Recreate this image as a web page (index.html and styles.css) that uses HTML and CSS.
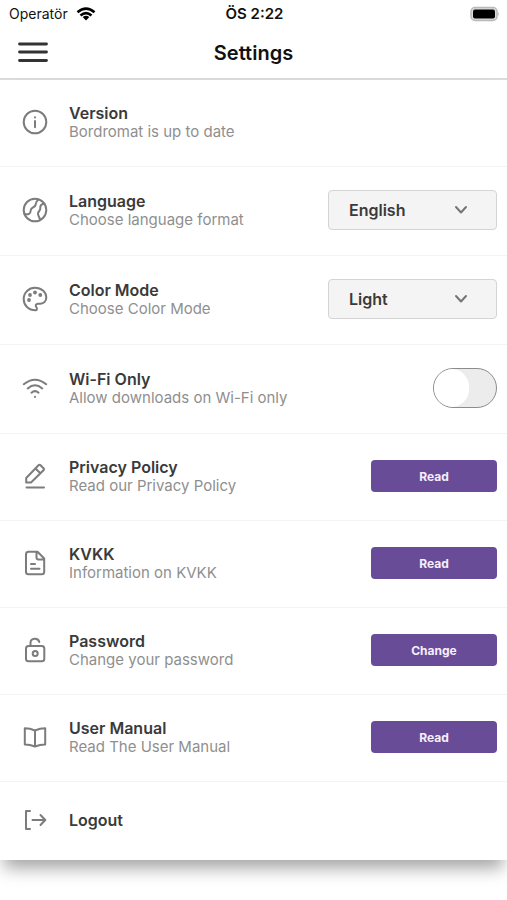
FILE: index.html
```html
<!DOCTYPE html>
<html lang="en">
<head>
<meta charset="utf-8">
<meta name="viewport" content="width=device-width, initial-scale=1">
<title>Settings</title>
<link rel="stylesheet" href="styles.css">
</head>
<body>
<header class="top">
  <div class="status">
    <div class="carrier">
      <span>Operatör</span>
      <svg width="20" height="14" viewBox="0 0 20 14" aria-hidden="true"><g fill="none" stroke="#000" stroke-width="2.6"><path d="M1.5 5.2Q10 -1.8 18.500 5.200"/><path d="M4.500 8.500Q10 3.800 15.500 8.500"/></g><path d="M6.700 10Q10 7.500 13.300 10L10 13.600z"/></svg>
    </div>
    <strong class="clock">ÖS 2:22</strong>
    <svg class="battery" width="30" height="16" viewBox="0 0 30 16" aria-hidden="true"><rect x="1" y="1.500" width="26" height="13" rx="4" fill="#ddd" stroke="#b9b9b9" stroke-width="1.500"/><rect x="3" y="3.500" width="22" height="9" rx="2"/><path d="M28.300 6q1.700 2 0 4z" fill="#aaa"/></svg>
  </div>
  <div class="nav">
    <button class="menu" type="button" aria-label="Menu"><svg width="30" height="22" viewBox="0 0 30 22"><path d="M1.500 2h27M1.500 10h27M1.500 18.500h27" stroke="#333" stroke-width="2.800" stroke-linecap="round"/></svg></button>
    <h1>Settings</h1>
  </div>
</header>
<main class="list">
  <section class="row">
    <svg class="icon" viewBox="0 0 26 26" aria-hidden="true"><circle cx="13" cy="13" r="11.300"/><path d="M13 12v6.300M13 8.200v.4"/></svg>
    <div class="text"><h2>Version</h2><p>Bordromat is up to date</p></div>
  </section>
  <section class="row">
    <svg class="icon" viewBox="0 0 26 26" aria-hidden="true"><circle cx="13" cy="13" r="11.300"/><path d="M2.500 17C6.500 18 8.500 17 8.700 13.500C8.900 9.500 13 11 13.500 8C13.900 5.500 14 4 16.700 2.500M22.300 6.500C19 7 18 9 18.300 11.500C18.500 14 15.700 14 16 17C16.200 19 17.500 20 18 22.800"/></svg>
    <div class="text"><h2><label for="language">Language</label></h2><p>Choose language format</p></div>
    <div class="pick"><select id="language"><option>English</option><option>Turkish</option></select><svg width="14" height="10" viewBox="0 0 14 10" aria-hidden="true"><path d="M2 2l5 5.500L12 2"/></svg></div>
  </section>
  <section class="row">
    <svg class="icon" viewBox="0 0 26 26" aria-hidden="true"><path d="M13.500 24.300C6.500 24.300 1.700 19.300 1.700 13C1.700 6.500 6.800 1.700 13 1.700C19.300 1.700 24.300 6 24.300 11.500C24.300 15 21.800 17.700 18.500 17.700H16C14 17.700 13 19.500 14.300 21C15.500 22.500 15 24.300 13.500 24.300Z"/><g class="dots"><circle cx="13" cy="6.500" r="1.900"/><circle cx="18.300" cy="9" r="1.900"/><circle cx="8" cy="9" r="1.900"/><circle cx="7" cy="14" r="1.900"/></g></svg>
    <div class="text"><h2><label for="mode">Color Mode</label></h2><p>Choose Color Mode</p></div>
    <div class="pick"><select id="mode"><option>Light</option><option>Dark</option></select><svg width="14" height="10" viewBox="0 0 14 10" aria-hidden="true"><path d="M2 2l5 5.500L12 2"/></svg></div>
  </section>
  <section class="row">
    <svg class="icon" viewBox="0 0 26 26" aria-hidden="true"><path d="M1.800 9.200Q13 .2 24.200 9.200M5.700 13.400Q13 7.200 20.300 13.400M9.500 17.700Q13 14.600 16.500 17.700M13 21.800v.1"/></svg>
    <div class="text"><h2><label for="wifi">Wi-Fi Only</label></h2><p>Allow downloads on Wi-Fi only</p></div>
    <input class="toggle" id="wifi" type="checkbox" role="switch">
  </section>
  <section class="row">
    <svg class="icon" viewBox="0 0 26 26" aria-hidden="true"><path d="M4.500 24.500h17.500M4.200 19.500V15L16.500 2.300Q17.500 1.300 18.500 2.300L21.500 5.300Q22.500 6.300 21.500 7.300L9 19.500ZM13.500 5.500L18.300 10.300"/></svg>
    <div class="text"><h2>Privacy Policy</h2><p>Read our Privacy Policy</p></div>
    <button class="action" type="button">Read</button>
  </section>
  <section class="row">
    <svg class="icon" viewBox="0 0 26 26" aria-hidden="true"><path d="M6.500 1.700H15.500L22.200 8.500V21.800Q22.200 24.300 19.700 24.300H6.500Q4 24.300 4 21.800V4.200Q4 1.700 6.500 1.700ZM14.500 2V7.500Q14.500 9.500 16.500 9.500H22M9 14h4M9 18.700h8.500"/></svg>
    <div class="text"><h2>KVKK</h2><p>Information on KVKK</p></div>
    <button class="action" type="button">Read</button>
  </section>
  <section class="row">
    <svg class="icon" viewBox="0 0 26 26" aria-hidden="true"><rect x="4" y="9" width="18.300" height="15.300" rx="2.500"/><path d="M8.500 9V5.800C8.500 .5 16.300 .3 17.300 5"/><circle cx="13.200" cy="16.500" r="2.500"/></svg>
    <div class="text"><h2>Password</h2><p>Change your password</p></div>
    <button class="action" type="button">Change</button>
  </section>
  <section class="row">
    <svg class="icon" viewBox="0 0 26 26" aria-hidden="true"><path d="M13 6.500Q8 4.300 2.800 4.300V20.500Q8 20.500 13 22.500Q18 20.500 23.200 20.500V4.300Q18 4.300 13 6.500ZM13 6.500V22.500"/></svg>
    <div class="text"><h2>User Manual</h2><p>Read The User Manual</p></div>
    <button class="action" type="button">Read</button>
  </section>
  <section class="row logout">
    <svg class="icon" viewBox="0 0 26 26" aria-hidden="true"><path d="M8 4H4V22H8M10.500 13H23M18.500 8L23.300 13L18.500 18"/></svg>
    <div class="text"><h2><a href="#logout">Logout</a></h2></div>
  </section>
</main>
</body>
</html>
```

FILE: styles.css
```css
* {
  box-sizing: border-box;
}

body {
  min-height: 100vh;
  margin: 0;
  background: #fff;
  color: #3a3a3a;
  font-family: Inter, "Liberation Sans", sans-serif;
}

h1,
h2,
p {
  margin: 0;
}

.top {
  border-bottom: 2px solid #dcdcdc;
  color: #111;
}

.status {
  display: grid;
  grid-template-columns: 1fr auto 1fr;
  align-items: center;
  height: 27px;
  padding: 0 7px 0 9px;
  font-size: 14px;
}

.carrier {
  display: flex;
  align-items: center;
  gap: 8px;
}

.clock {
  font-size: 15px;
  font-weight: 600;
}

.battery {
  justify-self: end;
}

.nav {
  display: grid;
  grid-template-columns: 1fr auto 1fr;
  align-items: center;
  height: 51px;
  padding: 0 18px;
}

.menu {
  display: flex;
  justify-self: start;
  padding: 0;
  border: 0;
  background: none;
}

h1 {
  font-size: 20px;
  font-weight: 600;
}

.list {
  background: #fff;
  box-shadow: 0 12px 16px -4px rgba(0, 0, 0, 0.36);
}

.row {
  display: flex;
  align-items: center;
  padding: 23px 10px 25px 22px;
  border-bottom: 1px solid #f4f4f4;
}

.icon {
  flex: none;
  width: 26px;
  height: 26px;
  margin-right: 21px;
  fill: none;
  stroke: #7c7c7c;
  stroke-width: 2;
  stroke-linecap: round;
  stroke-linejoin: round;
}

.dots {
  fill: #7c7c7c;
  stroke: none;
}

.text {
  flex: 1;
  min-width: 0;
}

h2 {
  font-size: 16px;
  font-weight: 600;
  line-height: 20px;
}

h2 a {
  color: inherit;
  text-decoration: none;
}

p {
  color: #8f8f8f;
  font-size: 15px;
  line-height: 18px;
}

.pick {
  display: grid;
  align-items: center;
  width: 169px;
}

.pick select,
.pick svg {
  grid-area: 1 / 1;
}

.pick select {
  width: 100%;
  height: 40px;
  padding: 0 20px;
  border: 1px solid #d4d4d4;
  border-radius: 4px;
  appearance: none;
  background: #f4f4f4;
  color: #3a3a3a;
  font: 600 16px Inter, "Liberation Sans", sans-serif;
}

.pick svg {
  justify-self: end;
  margin-right: 29px;
  fill: none;
  stroke: #757575;
  stroke-width: 2;
  stroke-linecap: round;
  stroke-linejoin: round;
  pointer-events: none;
}

.toggle {
  width: 64px;
  height: 40px;
  margin: 0;
  overflow: hidden;
  border: 1px solid #8c8c8c;
  border-radius: 20px;
  appearance: none;
  background: #ececec;
}

.toggle::before {
  content: "";
  display: block;
  width: 35px;
  height: 38px;
  border-radius: 19px;
  background: #fff;
}

.toggle:checked::before {
  margin-left: auto;
}

.action {
  width: 126px;
  height: 32px;
  padding: 0;
  border: 0;
  border-radius: 4px;
  background: #694c98;
  color: #f5effc;
  font: 700 12px Inter, "Liberation Sans", sans-serif;
}

.logout {
  padding-top: 25px;
  padding-bottom: 27px;
  border-bottom: 0;
}
```
